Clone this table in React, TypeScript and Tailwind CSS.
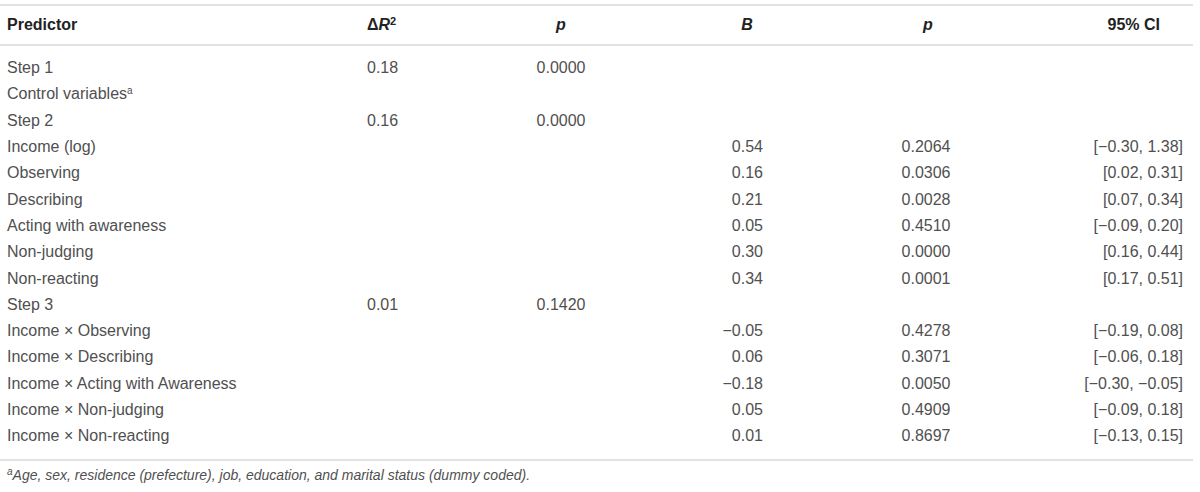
import React from "react";

type Row = {
  label: React.ReactNode;
  r2?: string;
  p1?: string;
  b?: string;
  p2?: string;
  ci?: string;
};

const rows: Row[] = [
  { label: "Step 1", r2: "0.18", p1: "0.0000" },
  {
    label: (
      <>
        Control variables<sup className="text-[10px] leading-none">a</sup>
      </>
    ),
  },
  { label: "Step 2", r2: "0.16", p1: "0.0000" },
  { label: "Income (log)", b: "0.54", p2: "0.2064", ci: "[\u22120.30, 1.38]" },
  { label: "Observing", b: "0.16", p2: "0.0306", ci: "[0.02, 0.31]" },
  { label: "Describing", b: "0.21", p2: "0.0028", ci: "[0.07, 0.34]" },
  { label: "Acting with awareness", b: "0.05", p2: "0.4510", ci: "[\u22120.09, 0.20]" },
  { label: "Non-judging", b: "0.30", p2: "0.0000", ci: "[0.16, 0.44]" },
  { label: "Non-reacting", b: "0.34", p2: "0.0001", ci: "[0.17, 0.51]" },
  { label: "Step 3", r2: "0.01", p1: "0.1420" },
  { label: "Income \u00d7 Observing", b: "\u22120.05", p2: "0.4278", ci: "[\u22120.19, 0.08]" },
  { label: "Income \u00d7 Describing", b: "0.06", p2: "0.3071", ci: "[\u22120.06, 0.18]" },
  { label: "Income \u00d7 Acting with Awareness", b: "\u22120.18", p2: "0.0050", ci: "[\u22120.30, \u22120.05]" },
  { label: "Income \u00d7 Non-judging", b: "0.05", p2: "0.4909", ci: "[\u22120.09, 0.18]" },
  { label: "Income \u00d7 Non-reacting", b: "0.01", p2: "0.8697", ci: "[\u22120.13, 0.15]" },
];

const cols = "grid grid-cols-[367px_103px_182px_190px_172px_179px]";

export default function App() {
  return (
    <div className="w-[1200px] h-[492px] bg-white font-['Liberation_Sans',Arial,sans-serif] text-[16px] text-[#505050]">
      <div className="pt-[4px]">
        <div className="w-[1193px] border-t-2 border-b-2 border-[#e2e2e2]">
          <div className={`${cols} h-[40px] items-center border-b-2 border-[#e2e2e2] font-bold text-[#222]`}>
            <div className="pl-[7px]">Predictor</div>
            <div>
              Δ<span className="italic">R</span>
              <sup className="text-[11px] leading-none">2</sup>
            </div>
            <div className="text-center italic">p</div>
            <div className="text-center italic">B</div>
            <div className="text-center italic">p</div>
            <div className="text-right pr-[33px]">95% CI</div>
          </div>
          <div className="pt-[9px] pb-[10px]">
            {rows.map((r, i) => (
              <div key={i} className={`${cols} h-[26.3px] items-center`}>
                <div className="pl-[7px] whitespace-nowrap">{r.label}</div>
                <div>{r.r2}</div>
                <div className="text-center">{r.p1}</div>
                <div className="text-right pr-[79px]">{r.b}</div>
                <div className="text-center pr-[4px]">{r.p2}</div>
                <div className="text-right pr-[10px] whitespace-nowrap">{r.ci}</div>
              </div>
            ))}
          </div>
        </div>
        <div className="mt-[4px] pl-[7px] italic text-[14px] leading-[20px] text-[#505050]">
          <sup className="text-[10px] leading-none">a</sup>
          Age, sex, residence (prefecture), job, education, and marital status (dummy coded).
        </div>
      </div>
    </div>
  );
}
